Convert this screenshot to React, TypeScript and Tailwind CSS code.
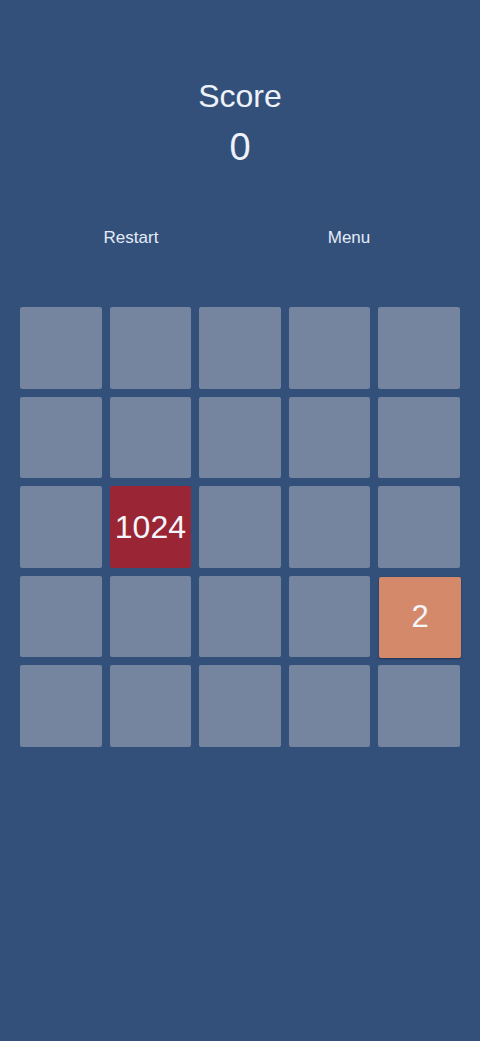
const board: (number | null)[] = [
  null, null, null, null, null,
  null, null, null, null, null,
  null, 1024, null, null, null,
  null, null, null, null, 2,
  null, null, null, null, null,
];

function Tile({ value }: { value: number | null }) {
  if (value === null) {
    return <div className="aspect-square rounded-[2px] bg-[#75849f]" />;
  }
  const tone =
    value >= 1024
      ? 'bg-[#9a2535] text-[32px]'
      : 'bg-[#d4896a] text-[31px] translate-x-[1px] translate-y-[1px] shadow-[0_1px_2px_rgba(20,30,50,0.6)]';
  return (
    <div
      className={`aspect-square rounded-[2px] flex items-center justify-center text-[#f4f6fa] ${tone}`}
    >
      {value}
    </div>
  );
}

export default function App() {
  return (
    <div
      className="min-h-[1041px] w-full bg-[#33507b] text-[#eef2f9]"
      style={{ fontFamily: '"Liberation Sans", Arial, sans-serif' }}
    >
      <div className="flex flex-col items-center pt-[76px]">
        <div className="text-[32px] leading-[40px]">Score</div>
        <div className="mt-[9px] text-[38px] leading-[44px]">0</div>
      </div>

      <div className="mt-[57px] flex justify-center gap-[48px]">
        <button className="w-[170px] text-[17px] leading-[24px] text-[#e4ebf7]">Restart</button>
        <button className="w-[170px] text-[17px] leading-[24px] text-[#e4ebf7]">Menu</button>
      </div>

      <div className="mt-[57px] px-[20px] grid grid-cols-5 gap-2">
        {board.map((v, i) => (
          <Tile key={i} value={v} />
        ))}
      </div>
    </div>
  );
}
